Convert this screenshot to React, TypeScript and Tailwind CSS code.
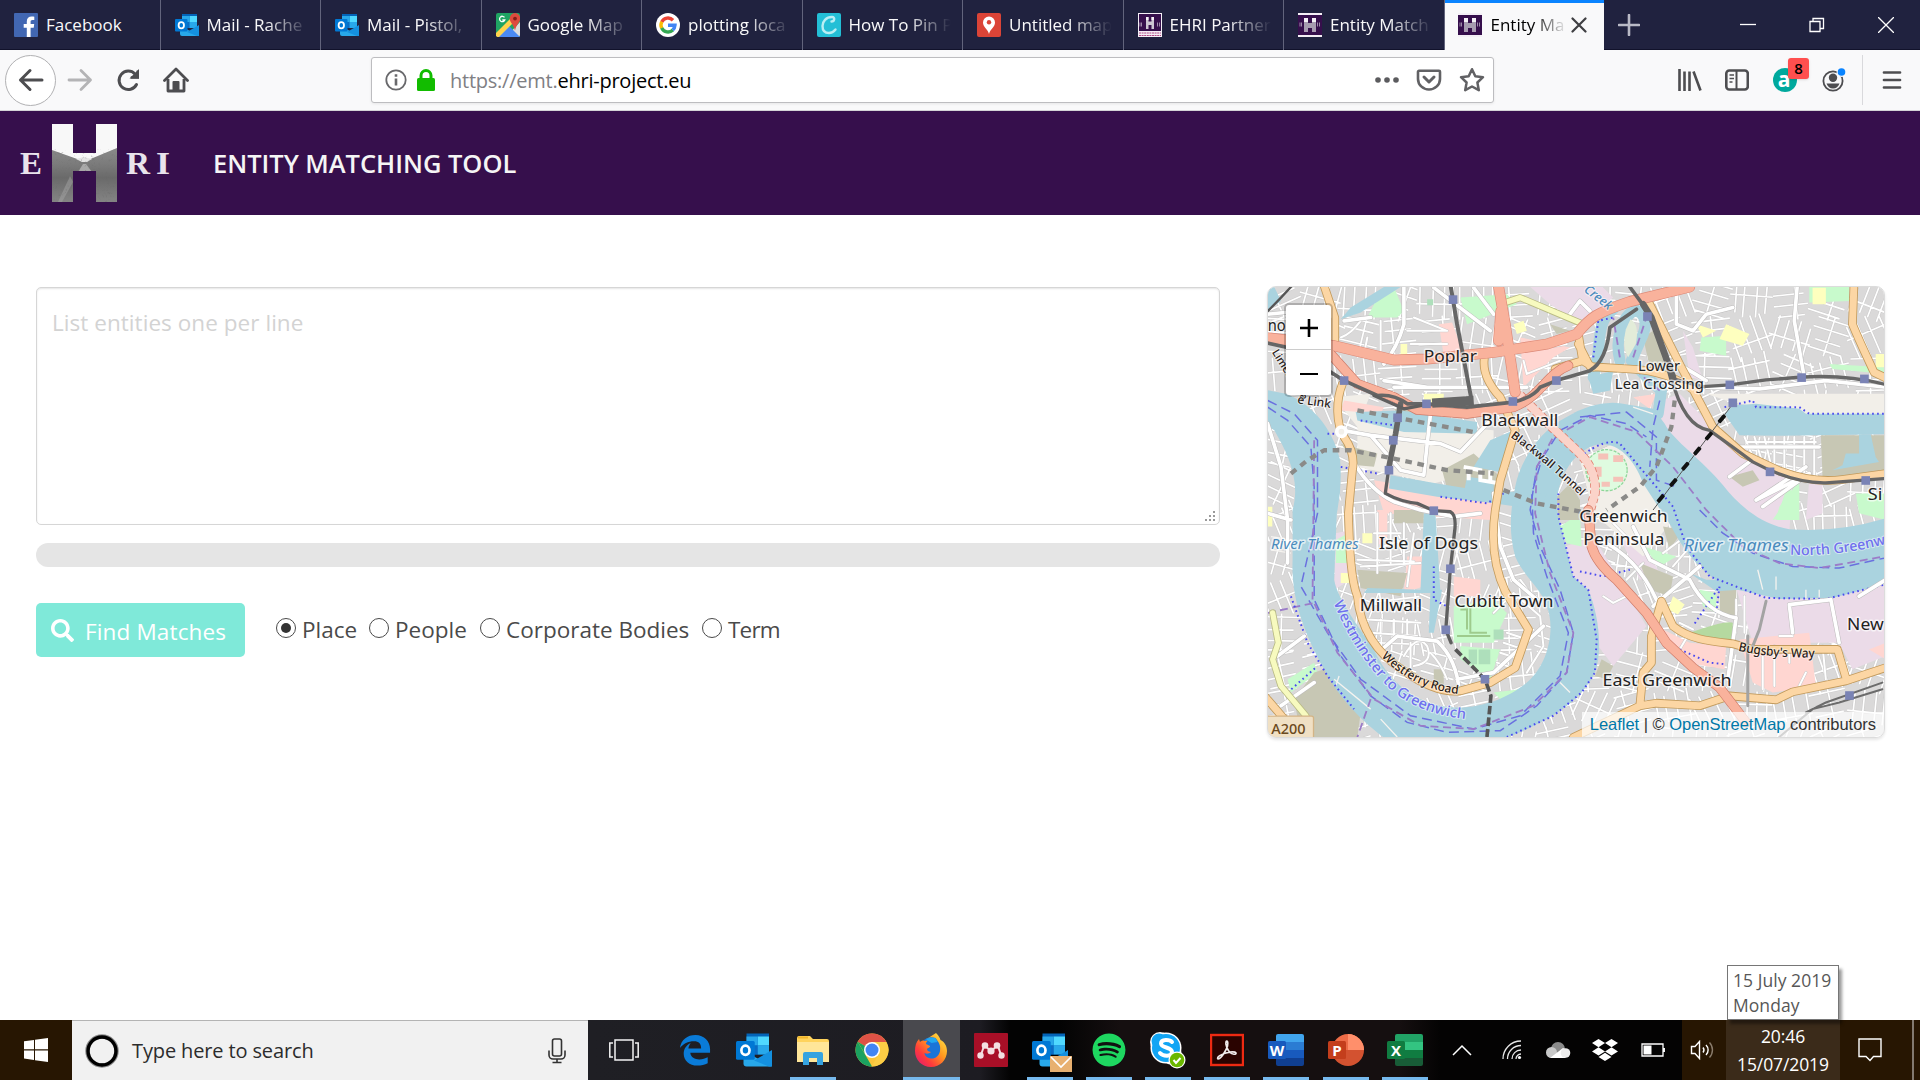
import React from "react";
import { FaSearch, FaDropbox, FaSpotify } from "react-icons/fa";

/* ---------- small drawings ---------- */

function Outlook({ className }: { className: string }) {
  return (
    <svg viewBox="0 0 24 24" className={className}>
      <rect x="7" y="1" width="15" height="14" fill="#0364b8" />
      <rect x="14.5" y="3" width="7.5" height="6" fill="#50d9ff" />
      <rect x="7" y="3" width="7.5" height="6" fill="#28a8ea" />
      <rect x="7" y="9" width="7.5" height="6" fill="#0a6bc4" />
      <rect x="14.5" y="9" width="7.5" height="6" fill="#28a8ea" />
      <path d="M5 12.5 L24 23 H7 a2 2 0 0 1-2-2z" fill="#28a8ea" />
      <path d="M24 12 L12 19 L22 23 H24z" fill="#1490df" />
      <rect x="0" y="6" width="12.5" height="12.5" rx="1" fill="#0078d4" />
      <ellipse cx="6.3" cy="12.2" rx="2.7" ry="3.1" fill="none" stroke="#fff" strokeWidth="1.8" />
    </svg>
  );
}

function Facebook() {
  return (
    <svg viewBox="0 0 24 24" className="size-6">
      <rect width="24" height="24" rx="1" fill="#4267b2" />
      <path d="M16.6 24v-9.2h3.1l.5-3.7h-3.6V8.8c0-1 .4-1.8 1.9-1.8h1.8V3.800c-.5-.1-1.500-.2-2.700-.2-2.800 0-4.800 1.700-4.800 4.800v2.700H9.700v3.700h3.100V24z" fill="#fff" />
    </svg>
  );
}

function GMaps() {
  return (
    <svg viewBox="0 0 24 24" className="size-6">
      <rect width="24" height="24" rx="2" fill="#1fa463" />
      <path d="M24 9 L10 24 H22a2 2 0 0 0 2-2z" fill="#dcdcdc" />
      <path d="M1 24 L12 12 L24 24z" fill="#4a89f3" />
      <path d="M0 20 L14 6 L17 10 L3 24 H1.500 L0 23z" fill="#ffd34d" />
      <path d="M19 0a5.500 5.500 0 0 1 5.300 5.500c0 4-4 6-5.300 12-1.300-6-5.300-8-5.300-12A5.500 5.500 0 0 1 19 0z" fill="#dd4b3e" />
      <circle cx="19" cy="5.600" r="1.900" fill="#821f17" />
      <path d="M8.500 4.400A2.700 2.700 0 1 0 8.800 7H6.300" fill="none" stroke="#fff" strokeWidth="1.300" />
    </svg>
  );
}

function Google() {
  return (
    <svg viewBox="0 0 24 24" className="size-6">
      <circle cx="12" cy="12" r="12" fill="#fff" />
      <g fill="none" strokeWidth="3.400">
        <path d="M17 7.200A7 7 0 0 0 5.700 9" stroke="#ea4335" />
        <path d="M5.800 8.700a7 7 0 0 0 0 6.600" stroke="#fbbc05" />
        <path d="M5.700 15a7 7 0 0 0 11.200 2" stroke="#34a853" />
        <path d="M12 12.200h7A7 7 0 0 1 16.700 17" stroke="#4285f4" />
      </g>
    </svg>
  );
}

function CLogo() {
  return (
    <svg viewBox="0 0 24 24" className="size-6">
      <rect width="24" height="24" rx="2" fill="#23bfd6" />
      <path d="M14.500 8.500c3 0 4-4.500.5-4.500-6 0-9.500 4.500-9.500 9 0 4.500 2.500 7 6.500 7 3 0 5-1.500 6.500-3.500" fill="none" stroke="#b9eef3" strokeWidth="2.400" strokeLinecap="round" />
    </svg>
  );
}

function PinLogo() {
  return (
    <svg viewBox="0 0 24 24" className="size-6">
      <rect width="24" height="24" rx="2" fill="#db4437" />
      <path d="M12 3.500a6 6 0 0 1 6 6c0 4.500-4.500 6-6 11.500-1.500-5.500-6-7-6-11.500a6 6 0 0 1 6-6z" fill="#fff" />
      <circle cx="12" cy="9.300" r="2.200" fill="#db4437" />
    </svg>
  );
}

function EhriIcon({ kind }: { kind: "full" | "band" }) {
  const full = kind === "full";
  return (
    <svg viewBox="0 0 24 24" className="size-6">
      <rect width="24" height="24" fill="#f4eff6" />
      <rect x={full ? 1 : 0} y={full ? 1 : 2} width={full ? 22 : 24} height={full ? 17 : 20} fill="#360f4c" />
      <path d={full ? "M8 4h2.500v4.500h3V4H16v12h-2.500v-4h-3v4H8z" : "M6 5h4v5h4V5h4v14h-4v-4h-4v4H6z"} fill={full ? "#cdc6d2" : "#a79cb0"} />
      <path d={full ? "M8 4h2.500v3H8zM13.500 4H16v3h-2.500z" : "M6 5h4v4H6zM14 5h4v4h-4z"} fill="#f3f0f5" />
      <path d="M2 9.500v4M3.500 9.500v4M19.500 9.500v4M21.500 9.500v4" stroke="#9d8aa8" />
      {full && <path d="M1 20h22M1 22.500h22" stroke="#b14a86" strokeDasharray="2 .6" />}
    </svg>
  );
}

/* ---------- browser chrome ---------- */

const tabs: { label: string; icon: React.ReactNode }[] = [
  { label: "Facebook", icon: <Facebook /> },
  { label: "Mail - Rache", icon: <Outlook className="size-6" /> },
  { label: "Mail - Pistol,", icon: <Outlook className="size-6" /> },
  { label: "Google Map", icon: <GMaps /> },
  { label: "plotting loca", icon: <Google /> },
  { label: "How To Pin P", icon: <CLogo /> },
  { label: "Untitled map", icon: <PinLogo /> },
  { label: "EHRI Partner", icon: <EhriIcon kind="full" /> },
  { label: "Entity Match", icon: <EhriIcon kind="band" /> },
];

function TabBar() {
  return (
    <div className="flex h-[50px] bg-[#20223f] text-[17px] text-[#f9f9fa] shadow-[inset_0_-1px_0_#11122b]">
      {tabs.map((t, i) => (
        <div key={i} className="flex w-[160.500px] shrink-0 items-center border-r border-[#62647c] pr-[7px] pl-[14px]">
          <span className="size-6 shrink-0">{t.icon}</span>
          <span className={`ml-[8px] min-w-0 flex-1 overflow-hidden whitespace-nowrap ${i === 0 ? "" : "[mask-image:linear-gradient(to_right,#000_55%,transparent_96%)]"}`}>
            {t.label}
          </span>
        </div>
      ))}
      <div className="flex w-[159px] shrink-0 items-center border-t-[3px] border-[#0a84ff] bg-[#f9f9fa] pb-[3px] pl-[13px] text-black">
        <EhriIcon kind="band" />
        <span className="ml-[9px] w-[75px] overflow-hidden whitespace-nowrap [mask-image:linear-gradient(to_right,#000_55%,transparent_102%)]">
          Entity Ma
        </span>
        <svg viewBox="0 0 16 16" className="ml-[5px] size-4">
          <path d="M1.500 1.500 L14.500 14.500 M14.500 1.500 L1.500 14.500" stroke="#3f3f42" strokeWidth="2.200" strokeLinecap="round" />
        </svg>
      </div>
      <div className="flex flex-1 items-center justify-between pr-[26px] pl-[14px]">
        <svg viewBox="0 0 22 22" className="size-[22px]">
          <path d="M11 1v20M1 11h20" stroke="#b9bac6" strokeWidth="2.600" strokeLinecap="round" />
        </svg>
        <div className="flex items-center gap-[53px]">
          <svg viewBox="0 0 16 16" className="size-4"><path d="M0 7.500h16" stroke="#fff" strokeWidth="1.300" /></svg>
          <svg viewBox="0 0 16 16" className="size-4" fill="none" stroke="#fff" strokeWidth="1.300"><path d="M1 4.500h10v10H1zM4 4.500V1.500h10.500v10H11" /></svg>
          <svg viewBox="0 0 16 16" className="size-4"><path d="M0 0L16 16M16 0L0 16" stroke="#fff" strokeWidth="1.300" /></svg>
        </div>
      </div>
    </div>
  );
}

function NavBar() {
  return (
    <div className="flex h-[61px] items-center border-b border-[#d3d3d6] bg-[#f9f9fa]">
      <div className="ml-[5px] flex size-[51px] shrink-0 items-center justify-center rounded-full border border-[#b1b1b3] bg-white">
        <svg viewBox="0 0 26 24" className="h-6 w-[26px]" fill="none" stroke="#4d4d50" strokeWidth="3" strokeLinecap="round" strokeLinejoin="round">
          <path d="M24 12H2.500M12 2.500L2.500 12L12 21.500" />
        </svg>
      </div>
      <svg viewBox="0 0 26 24" className="ml-[11px] h-6 w-[26px] shrink-0" fill="none" stroke="#b4b4b6" strokeWidth="2.800" strokeLinecap="round" strokeLinejoin="round">
        <path d="M2 12H23.500M14 2.500L23.500 12L14 21.500" />
      </svg>
      <svg viewBox="0 0 24 24" className="ml-[23px] size-6 shrink-0" fill="none" stroke="#4d4d50" strokeWidth="3">
        <path d="M20.500 16.500A9.200 9.200 0 1 1 19 6" strokeLinecap="round" />
        <path d="M23 1v9.500h-9.500z" fill="#4d4d50" stroke="none" />
        <path d="M21.800 2.500v7h-7" strokeWidth="2.400" />
      </svg>
      <svg viewBox="0 0 26 26" className="ml-[23px] size-[26px] shrink-0" fill="none" stroke="#4d4d50" strokeWidth="2.800" strokeLinejoin="round">
        <path d="M1.500 13.500L13 2L24.500 13.500" strokeLinecap="round" />
        <path d="M5 12v12h16V12" />
        <path d="M10.500 24v-9h5v9z" strokeWidth="2" fill="#4d4d50" />
      </svg>
      <div className="ml-[182px] flex h-[46px] w-[1123px] shrink-0 items-center rounded-[3px] border border-[#bdbdc0] bg-white pl-[13px] shadow-[0_1px_3px_rgba(0,0,0,0.08)]">
        <svg viewBox="0 0 22 22" className="size-[22px]" fill="none" stroke="#68686b" strokeWidth="1.800">
          <circle cx="11" cy="11" r="9.700" />
          <path d="M11 9.500V16.500M11 5.300V7.700" strokeWidth="2.600" />
        </svg>
        <svg viewBox="0 0 20 22" className="ml-[9px] h-[22px] w-5">
          <path d="M5 10V6.500a5 5 0 0 1 10 0V10" fill="none" stroke="#12bc00" strokeWidth="3" />
          <rect x="1" y="9" width="18" height="13" rx="1.500" fill="#12bc00" />
        </svg>
        <span className="ml-[14px] pt-[1px] text-[20px] tracking-[-0.240px] text-[#808084]">
          https://emt.<span className="text-black">ehri-project.eu</span>
        </span>
        <div className="mr-[8px] ml-auto flex items-center gap-[17px]">
          <svg viewBox="0 0 24 6" className="h-[6px] w-6" fill="#5b5b5e"><circle cx="3" cy="3" r="2.800" /><circle cx="12" cy="3" r="2.800" /><circle cx="21" cy="3" r="2.800" /></svg>
          <svg viewBox="0 0 26 22" className="h-[22px] w-[26px]" fill="none" stroke="#616164" strokeWidth="2.600" strokeLinecap="round" strokeLinejoin="round">
            <path d="M3 1.800h20a1 1 0 0 1 1 1V10a11 10.500 0 0 1-22 0V2.800a1 1 0 0 1 1-1z" />
            <path d="M8 8l5 5 5-5" strokeWidth="3" />
          </svg>
          <svg viewBox="0 0 26 26" className="size-[26px]" fill="none" stroke="#616164" strokeWidth="2.500" strokeLinejoin="round">
            <path d="M13 2.200l3.300 7 7.700 1-5.600 5.300 1.400 7.700L13 19.500l-6.800 3.700 1.400-7.700L2 10.200l7.700-1z" />
          </svg>
        </div>
      </div>
      <svg viewBox="0 0 24 22" className="ml-[184px] h-[22px] w-6 shrink-0" stroke="#4d4d50" strokeWidth="2.600">
        <path d="M1.500 0V22M6.500 2.500V22M11.500 2.500V22M15.500 2.500L22.500 21.500" />
      </svg>
      <svg viewBox="0 0 24 22" className="ml-[23px] h-[22px] w-6 shrink-0" fill="none" stroke="#4d4d50" strokeWidth="2.600">
        <rect x="1.300" y="1.500" width="21.500" height="19" rx="3" />
        <path d="M11.500 2v18" strokeWidth="2" /><path d="M4.500 6h4.500M4.500 9.500h4.500M4.500 13h3" strokeWidth="1.500" />
      </svg>
      <div className="relative ml-[24px] size-6 shrink-0">
        <svg viewBox="0 0 24 24" className="size-6">
          <circle cx="12" cy="12" r="12" fill="#00a99d" />
          <text x="11" y="18.500" textAnchor="middle" fontSize="21" fontWeight="700" fill="#fff" fontFamily="Open Sans">a</text>
        </svg>
        <div className="absolute -top-[10px] left-[15px] flex h-[21px] w-[21px] items-center justify-center rounded-[3px] bg-[#ff4f4f] text-[15px] font-semibold text-black shadow">8</div>
      </div>
      <svg viewBox="0 0 24 24" className="ml-[25px] size-6 shrink-0">
        <circle cx="11" cy="13" r="9.600" fill="none" stroke="#4d4d50" strokeWidth="1.800" />
        <circle cx="11" cy="9.800" r="4.200" fill="#4d4d50" />
        <path d="M4.500 15.500h13c-1 3-3.500 5-6.500 5s-5.500-2-6.500-5z" fill="#4d4d50" />
        <circle cx="19.500" cy="4" r="5" fill="#f9f9fa" /><circle cx="19.500" cy="4" r="3.800" fill="#0a84ff" />
      </svg>
      <div className="ml-[16px] h-[50px] w-px shrink-0 bg-[#d9d9dc]" />
      <svg viewBox="0 0 20 20" className="ml-[19px] h-5 w-5 shrink-0" stroke="#4d4d50" strokeWidth="2.700" strokeLinecap="round">
        <path d="M2 2.500H18M2 10H18M2 17.500H18" />
      </svg>
    </div>
  );
}

/* ---------- page header ---------- */

function Logo() {
  return (
    <svg viewBox="0 0 154 82" className="h-[82px] w-[154px]">
      <defs>
        <linearGradient id="ground" x1="0" y1="0" x2="0" y2="1">
          <stop offset="0" stopColor="#8a8a8a" /><stop offset=".3" stopColor="#7b7b7b" /><stop offset=".55" stopColor="#6a6a6a" /><stop offset="1" stopColor="#848484" />
        </linearGradient>
        <clipPath id="h"><path d="M34 2h21v29h23V2h21v78H78V49H55v31H34z" /></clipPath>
        <filter id="grain"><feTurbulence baseFrequency=".3" numOctaves="2" /><feColorMatrix values="0 0 0 0 .15 0 0 0 0 .15 0 0 0 0 .15 2.200 0 0 0 -.8" /></filter>
      </defs>
      <g clipPath="url(#h)">
        <rect x="34" y="2" width="65" height="78" fill="#f8f8f8" />
        <path d="M34 28L62 38H70L99 26V80H34z" fill="url(#ground)" />
        <path d="M58 37L66 35L74 37L69 40H64z" fill="#e4e4e4" />
        <path d="M65 42H68L74 50H60z" fill="#a9a9a9" />
        <path d="M52 54L40 80H44L55 60z" fill="#a8a8a8" opacity=".45" />
        <rect x="34" y="32" width="65" height="48" filter="url(#grain)" opacity=".5" />
      </g>
      <g fill="#e9e4ec" fontFamily="Liberation Serif" fontWeight="700" fontSize="32">
        <text x="2" y="51.500" textLength="22" lengthAdjust="spacingAndGlyphs">E</text>
        <text x="108" y="51.500" textLength="24" lengthAdjust="spacingAndGlyphs">R</text>
        <text x="138" y="51.500" textLength="14" lengthAdjust="spacingAndGlyphs">I</text>
      </g>
    </svg>
  );
}

/* ---------- map ---------- */

function seeded(seed: number) {
  let s = seed;
  return () => {
    s = (s * 16807) % 2147483647;
    return s / 2147483647;
  };
}

/* Minor streets: a jittered lattice with a local rotation per district. */
function minorStreets() {
  const r = seeded(4177);
  const out: string[] = [];
  for (let cx = 0; cx < 1900; cx += 118) {
    for (let cy = 0; cy < 1400; cy += 112) {
      const a = (r() - 0.5) * 0.9;
      const c = Math.cos(a), s = Math.sin(a);
      const line = (x1: number, y1: number, x2: number, y2: number) =>
        out.push(`M${(cx + 59 + x1 * c - y1 * s).toFixed(0)} ${(cy + 56 + x1 * s + y1 * c).toFixed(0)}L${(cx + 59 + x2 * c - y2 * s).toFixed(0)} ${(cy + 56 + x2 * s + y2 * c).toFixed(0)}`);
      const vert = r() > 0.5;
      for (let k = -1.5; k <= 1.5; k++) {
        const o = k * 33 + (r() - 0.5) * 10;
        const b = 38 + r() * 24, e = 38 + r() * 24;
        if (vert) line(o, -b, o, e); else line(-b, o, e, o);
      }
      const q = (r() - 0.5) * 60;
      if (vert) line(-64, q, 64, q); else line(q, -62, q, 62);
    }
  }
  return out.join("");
}
const streets = minorStreets();

const trunk = [
  "M10 170L220 195L400 238L500 235L700 215L860 190L950 160C990 110 1010 95 1110 62L1290 18",
  "M712 0L735 130L765 335",
  "M722 90L715 180M860 190",
];
const trunkSouth = [
  "M205 215L290 310L400 350L470 388L620 400L760 380C840 350 860 280 925 255",
  "M985 690L995 800Q1010 850 1070 900L1160 1000L1220 1090L1300 1165L1380 1225L1460 1330",
];
const primary = [
  "M185 0L222 110L222 190", "M245 310C225 360 225 430 250 470Q285 520 275 570L263 700C266 800 270 900 290 950C300 1060 360 1130 430 1175C500 1225 560 1240 600 1235L690 1210L765 1165L805 1050L735 935C695 850 695 760 705 690L720 600L765 450L720 350Q665 290 672 235",
  "M1165 60L1265 260L1360 440L1450 520L1560 572Q1660 610 1750 598L1880 580",
  "M955 190L990 258L1110 265Q1230 270 1310 335", "M955 160L968 240L1000 260M885 265L968 240",
  "M1785 0L1780 130C1800 180 1820 220 1845 275L1880 292",
  "M1205 965L1240 1040C1290 1080 1350 1085 1420 1093L1480 1110H1735L1760 1195", "M940 1375L1140 1280L1190 1272L1320 1280L1410 1250L1550 1262L1600 1238L1760 1205L1880 1165",
  "M1140 1280L1150 1180L1175 1150V1070L1205 965",
  "M10 1250L70 1320",
];
const white = [
  "M400 320H800M370 300L500 320M430 18V130Q410 200 370 250M330 110L250 120", "M245 450L330 465L540 490L600 515L690 420M330 465L420 570L490 585L510 400M520 20L690 150",
  "M285 555Q330 630 400 665L480 690L580 710L660 700", "M370 1105L410 1070L530 1085Q590 1140 597 1240M590 1200L700 1180L850 1040",
  "M1250 0L1250 130L1300 150L1340 100L1420 80M1615 0L1605 120L1635 290M1340 300L1240 240", "M1340 320L1500 325L1700 300L1880 320",
  "M1020 780Q1130 830 1190 960M1120 740L1170 840L1290 900Q1340 1000 1430 1015L1405 1200", "M1180 980L1320 860M1590 975L1600 1060M1590 975L1715 960L1740 1090M1800 950L1880 900",
  "M1440 500H1680", "M1410 590L1470 545M1490 660L1640 560M1510 680L1650 580L1490 660M20 100L120 90", "M640 20L700 100M930 100L960 60L990 90",
  "M20 430L60 560L80 720L80 850M20 700L90 720", "M60 1280L160 1210M50 1130L130 1070", "M700 640L720 800L760 900L830 960",
];
const lanes = [
  "M1455 470L1480 530M1485 470L1510 550M1515 470L1535 555M1545 470V570M1575 470V575M1605 470V580M1635 470V585M1665 470V585M1460 485H1670",
  "M1430 960V1060M1455 950V1060M1510 1130V1230M1545 1100V1220M1590 1110V1150M1690 1100L1700 1200M1640 1180L1620 1220M1560 1070H1600",
  "M1030 950L1060 970L1120 940M1100 900L1150 850M1060 730L1120 790M1210 820L1290 760M1240 860L1300 790M1260 1030L1300 1050M1260 1110L1290 1060",
  "M700 1000L760 940L840 1010L850 1100L800 1180M740 1060L800 1080M730 1090L790 1110M720 1120L780 1140M710 1150L770 1170M780 900L840 980",
  "M320 1020L480 1030M330 1060L470 1070M360 1020V1070M400 1020V1070M440 1020V1070M430 1130Q470 1060 500 1100Q520 1150 460 1160M450 1090V1200M510 1120Q540 1150 560 1200",
  "M290 840L460 845M300 860L480 850M350 700V880M390 700V850M430 730V850M460 760L440 920M340 760H420",
  "M790 240L800 280L900 240M800 210L920 190M300 120Q270 160 240 170M320 170L310 220M360 120V210M460 110L560 150M440 150H560M450 190H560",
];

const stations: [number, number][] = [
  [578, 56], [250, 300], [498, 370], [758, 363], [889, 300], [411, 412], [398, 480], [385, 570], [520, 692], [570, 867], [556, 1051], [674, 1200],
  [1163, 107], [1411, 313], [1627, 291], [1816, 295], [1532, 575], [1820, 601], [1771, 1249], [1420, 367],
];

function Label({ x, y, w, size = 51, children, fill = "#222", italic = false }: { x: number; y: number; w: number; size?: number; children: string; fill?: string; italic?: boolean }) {
  return (
    <text x={x} y={y} fontSize={size} fill={fill} fontStyle={italic ? "italic" : "normal"} textLength={w} lengthAdjust="spacingAndGlyphs" stroke="#fff" strokeOpacity=".65" strokeWidth="9" strokeLinejoin="round" paintOrder="stroke">
      {children}
    </text>
  );
}

function Lines({ d, color, width, dash, cap = "round" }: { d: string[]; color: string; width: number; dash?: string; cap?: "round" | "butt" }) {
  return <path d={d.join("")} fill="none" stroke={color} strokeWidth={width} strokeDasharray={dash} strokeLinecap={cap} strokeLinejoin="round" />;
}

function MapDrawing() {
  return (
    <svg viewBox="21 18 1854 1356" preserveAspectRatio="none" className="block h-full w-full" fontFamily="Noto Sans">
      <rect x="0" y="0" width="1900" height="1400" fill="#dad9d9" />
      <path d={streets} fill="none" stroke="#cbcaca" strokeWidth="8" />
      <path d={streets} fill="none" stroke="#fff" strokeWidth="5" />
      {/* land use */}
      <g fill="#ebdbe8">
        <path d="M790 0H1010L1060 50L960 130L870 70z" />
        <path d="M1180 370L1260 340L1370 450L1600 600L1590 760L1490 720L1400 640L1240 480z" />
        <path d="M915 800L1000 770L1080 900L1160 1040L1060 1160L1000 1080L985 940L940 890z" />
        <path d="M1060 730L1100 700L1200 880L1140 900zM1430 925L1880 915V1130L1780 1170L1740 1090H1480z" />
        <path d="M225 760L270 750V900L220 930zM1650 600L1690 590V700L1640 720zM1270 150L1300 200L1330 300L1290 290z" />
      </g>
      <g fill="#f2efe9">
        <path d="M290 420L700 450L700 560L520 610L290 560zM1340 340H1880V410H1620L1400 360zM960 540L1060 490L1140 540L1240 720L1150 830L1000 700zM220 350L330 340L290 440z" />
      </g>
      <g fill="#ffd6d1">
        <path d="M535 130L575 125L610 220L550 225zM780 170L930 200L880 230L790 320zM340 600L700 660L690 720L370 700zM440 830H490V920L430 940zM580 890L660 900V950H580z" />
        <path d="M1210 1050L1290 1090L1400 1100L1395 1170L1280 1150zM1440 1080L1650 1060L1670 1220L1540 1240L1480 1210zM1120 350L1190 340L1170 385zM1830 1110L1880 1090V1140z" />
        <path d="M350 690H380V770L350 800zM250 360L370 380L360 400L240 390z" />
      </g>
      <g fill="#c8facc">
        <path d="M350 50L390 18H400L430 90L410 110H320zM600 50L740 40L770 70L620 130zM1650 0H1770L1770 60L1650 65zM1325 170L1400 165L1400 225L1320 210z" />
        <path d="M580 980L700 960L740 1000L700 1090H580zM600 1100L720 1110L690 1200L600 1140zM700 1240L780 1230L740 1280zM225 780L262 760V850H225zM1590 600L1610 700L1540 720L1560 690z" />
        <path d="M900 740L960 700L965 800L920 790zM1790 640H1880V720L1800 700zM1710 250L1880 260V280L1720 265zM80 1200L160 1150L170 1180L90 1240zM1150 800L1250 830L1200 860zM1320 930L1370 940V1000L1330 980zM1560 680L1620 600V720H1550z" />
      </g>
      <path d="M1290 1060Q1400 1020 1420 1030V1090L1290 1080z" fill="#b5d9a0" />
      <g fill="#aedfbb"><path d="M625 1110H650V1155H625zM655 1110H690V1155H655zM700 1050h30v30h-30zM500 55h18v18h-18z" /></g>
      <path d="M600 990H620V1050M630 985V1060H680M590 1070H690" fill="none" stroke="#9ecb8d" strokeWidth="6" />
      <g fill="#c7c7b4">
        <path d="M290 870L440 880L420 950L300 925zM160 1180L190 1170L300 1300L290 1374H120L100 1260zM545 570L640 520L720 590L700 640L560 625zM400 385L510 395V420H420zM1685 465H1875V585L1690 590z" />
        <path d="M1150 170L1180 150L1230 280L1170 260zM890 650L930 610L960 660V720H895zM1140 850L1240 890L1230 950L1170 930zM1380 930H1430V1010L1380 1000zM1410 590L1480 570L1500 600L1450 620zM520 1170H550V1220H520zM240 490L350 520L340 560L290 555zM870 130L930 150L890 160zM400 690H490V730H400zM1210 740L1270 750L1230 810zM1025 1140L1060 1160L1040 1200L1005 1190z" />
      </g>
      <g fill="#feffbf">
        <path d="M420 190h20v35h-20zM490 340h60v40h-60zM760 130l30-10 10 30-30 10zM1310 130l60 20-40 20zM1400 130L1470 160L1450 195L1380 175zM1660 20h40v50h-40zM1850 220h30v40h-30zM240 880h25v30h-25zM305 760h30v30h-30zM1240 950l35 25-20 30-30-15zM20 680h14v60h-14z" />
      </g>
      <Lines d={lanes} color="#cbcaca" width={9} />
      <Lines d={lanes} color="#fff" width={6} />

      {/* river */}
      <path
        d="M0 325L75 340C150 370 215 440 238 540Q245 620 228 700L220 900C230 960 300 1050 340 1110C380 1200 450 1260 540 1280C640 1300 740 1260 800 1210C870 1150 885 1040 860 980C840 920 790 890 765 830C745 760 750 690 765 620C780 540 840 450 920 410Q1000 360 1080 368L1180 385L1215 430C1240 480 1330 540 1390 615C1440 680 1510 735 1590 748Q1740 760 1890 712V910L1720 955L1560 958L1410 925C1340 890 1280 830 1235 740L1150 610C1110 500 1030 460 960 520C910 560 880 640 895 710L915 790L940 890L985 930C1015 1000 1030 1110 1005 1180C970 1250 900 1320 700 1390H390C330 1350 240 1270 190 1170C130 1060 90 960 95 840V690C120 600 80 520 40 450L0 420z"
        fill="#aad3df"
      />
      <g fill="#aad3df">
        <path d="M285 395L420 390L650 425V460L430 455L290 420z" />
        <path d="M390 585L530 610L650 630L860 640L840 690L700 670L530 650L385 625z" />
        <path d="M690 480L760 450L740 580L640 560zM620 590L700 600V640H610z" />
        <path d="M490 700H525L540 940H310L320 925L480 930zM510 930H545L520 1060H505z" />
        <path d="M1395 400L1420 375L1490 370L1620 385L1640 400H1880V462L1560 466L1440 465z" />
        <path d="M1800 462H1835L1850 530L1860 545L1720 570L1750 555L1760 520H1800zM1290 880L1340 900H1440V930L1370 935z" />
        <path d="M985 290L1060 270L1050 330L1000 340z" />
        <path d="M20 20L40 18L60 60L20 90zM270 80L370 18H420L300 95L240 115z" />
      </g>
      <Lines d={["M1000 290C1030 200 1000 130 1060 85", "M1080 240C1065 180 1085 100 1130 88Q1170 105 1150 160L1115 240Q1150 280 1205 330L1195 400"]} color="#aad3df" width={34} />
      <path d="M1112 115Q1140 130 1128 190L1105 230Q1085 200 1098 145z" fill="#e3ecd9" />
      <circle cx="1040" cy="570" r="62" fill="#dffbe0" stroke="#8fd79a" strokeWidth="4" strokeDasharray="9 4" />
      <g fill="#f5c2b8"><path d="M1015 520h30v18h-30zM1060 525h30v20h-30zM1005 560h20v30h-20zM1060 590h30v15h-30zM1025 605h25v15h-25z" /></g>
      {/* marina blocks and jetties */}
      <g fill="none" stroke="#fff" strokeWidth="12"><path d="M610 560L660 570V600L720 610M625 560V600M690 570V600" /></g>
      <g fill="none" stroke="#f5f3ef" strokeWidth="4">
        <path d="M220 1200L330 1290M235 1190L225 1220M1495 870L1510 930M1550 890V930M1640 930V955M1680 930V955M1120 380L1180 400M900 1210L930 1240M360 1320L410 1374M30 770L95 780M30 810L90 820M1000 760V800" />
      </g>

      {/* ferry routes and park paths */}
      <g fill="none" stroke="#6a70df" strokeWidth="4.500" strokeDasharray="30 16">
        <path d="M20 380L80 420L150 500L160 620V960L240 1130L330 1250L440 1330L560 1360L720 1355L830 1280L920 1180L940 1060L900 930L840 800L810 690L830 560L900 450L990 405L1100 430L1160 470" />
        <path d="M20 360L100 400L170 480V700L120 920L200 1060L300 1200L450 1310L640 1350L780 1310L900 1190L925 1060L860 890L820 760L815 640L850 520" />
        <path d="M960 410L1100 395L1190 470L1190 600L1250 620M1320 690L1390 760L1480 820L1600 860L1740 865L1875 835" />
        <path d="M1200 360L1180 440L1170 560" />
      </g>
      <g fill="none" stroke="#9b7cc8" strokeWidth="5.500" strokeDasharray="24 14">
        <path d="M160 480L155 960L230 1120L340 1260L480 1340L640 1350L820 1280L920 1180L940 1060L870 880L825 700L830 560L880 470L990 410L1130 455L1240 560L1340 690L1450 800L1560 850L1680 865L1875 830" />
        <path d="M20 1000L160 970M330 1260L290 1374M1200 330L1140 280M1080 230L1060 110M1120 230L1160 110" />
      </g>
      <g fill="none" stroke="#4a4af0" strokeWidth="6" strokeDasharray="5 10">
        <path d="M960 530Q1040 470 1080 490L1240 680L1280 800L1350 890L1520 955L1700 958L1875 915" />
        <path d="M895 640V710L915 790L940 890L985 930L1010 1080L1005 1180L965 1240L880 1310L740 1374" />
        <path d="M90 950L140 1090L200 1190L280 1290M540 650L680 670L730 640M240 560L350 580M300 420L400 435M520 860V960L560 980" />
        <path d="M1395 380L1480 360L1490 380H1620L1650 400H1875M1000 230L1015 120L1060 110" />
        <path d="M960 875L1030 890L1110 870M1370 1000L1380 920L1300 1040M80 1240L170 1160M200 460H250M1260 1110L1350 1150L1400 1155" />
      </g>

      {/* streets */}
      <Lines d={white} color="#bcbbbb" width={14} />
      <Lines d={white} color="#fff" width={11} />
      <Lines d={["M35 1000L52 1090L35 1140L60 1220L135 1310", "M735 65L780 50L970 130"]} color="#b9bb84" width={21} />
      <Lines d={["M35 1000L52 1090L35 1140L60 1220L135 1310", "M735 65L780 50L970 130"]} color="#f7fabf" width={16} />
      {/* tunnel */}
      <Lines d={["M780 345L870 435L960 520Q1010 570 1005 640L985 710"]} color="#e08070" width={29} dash="14 8" cap="butt" />
      <Lines d={["M780 345L870 435L960 520Q1010 570 1005 640L985 710"]} color="#fbd3c9" width={24} />
      <Lines d={primary} color="#c29a5c" width={26} />
      <Lines d={primary} color="#fcd6a4" width={21} />
      <circle cx="242" cy="454" r="14" fill="#f2efe9" stroke="#fff" strokeWidth="11" />
      <Lines d={trunk} color="#dd8a78" width={33} />
      <Lines d={trunkSouth} color="#cf7b69" width={30} />
      <Lines d={trunk} color="#f9b29c" width={29} />
      <Lines d={trunkSouth} color="#f9b29c" width={26} />

      {/* railways */}
      <Lines d={["M10 185L100 205L250 300L350 345Q400 340 440 370L500 370L620 380L760 365Q820 350 840 320L889 300L990 270Q1040 240 1050 140L1130 85", "M1110 18L1163 90L1205 190L1235 300"]} color="#666" width={11} />
      <Lines d={["M1150 70L1175 110L1215 220L1240 290"]} color="#666" width={20} />
      <Lines d={["M1235 290C1250 350 1280 440 1350 450Q1420 500 1480 545Q1600 610 1700 608L1880 595", "M1240 295L1330 318L1411 313L1520 298L1620 290Q1760 280 1880 312"]} color="#666" width={10} />
      <Lines d={["M570 10L590 130L632 350"]} color="#666" width={12} />
      <Lines d={["M515 368L640 360"]} color="#666" width={28} cap="butt" />
      <Lines d={["M420 370L405 460L385 560"]} color="#666" width={17} />
      <Lines d={["M385 560L374 640Q420 665 470 670L520 692L570 695Q590 705 582 760L570 867L556 1051L572 1090", "M340 345L430 385L500 372"]} color="#5f5f5f" width={10} />
      <Lines d={["M585 1110L674 1200L692 1250L680 1374"]} color="#555" width={11} dash="26 9" cap="butt" />
      <Lines d={["M290 390L640 455", "M90 580L140 540L190 510L270 510L400 535L560 570L700 580M730 630L830 670L990 700", "M1245 360L1235 440L1190 560L1140 620L1040 690"]} color="#8a8a88" width={13} dash="20 17" cap="butt" />
      <Lines d={["M1520 965L1500 1050L1480 1100", "M1465 1070V1280"]} color="#a3a3a3" width={9} />
      <Lines d={["M1640 1300L1700 1270L1870 1210", "M1560 1374L1660 1290L1740 1270L1870 1230"]} color="#6c6c6c" width={6} />
      <Lines d={["M21 90L60 50L90 18"]} color="#555" width={7} />
      <path d="M1420 370L1180 690" stroke="#555" strokeWidth="3" />
      <g fill="#111">
        {[[1387, 415], [1348, 467], [1313, 512], [1277, 558], [1241, 607], [1203, 655]].map(([x, y]) => (
          <rect key={x} x={x - 14} y={y - 6} width="28" height="12" rx="3" transform={`rotate(-50 ${x} ${y})`} />
        ))}
      </g>
      <g fill="#7a83b5">
        {stations.map(([x, y]) => <rect key={`${x}-${y}`} x={x - 13} y={y - 13} width="26" height="26" />)}
      </g>

      {/* labels */}
      <Label x={490} y={243} w={160}>Poplar</Label>
      <Label x={663} y={438} w={232}>Blackwall</Label>
      <Label x={1135} y={270} w={126} size={41}>Lower</Label>
      <Label x={1065} y={325} w={268} size={41}>Lea Crossing</Label>
      <Label x={355} y={807} w={298}>Isle of Dogs</Label>
      <Label x={297} y={994} w={188}>Millwall</Label>
      <Label x={582} y={983} w={298}>Cubitt Town</Label>
      <Label x={958} y={727} w={266}>Greenwich</Label>
      <Label x={970} y={795} w={244}>Peninsula</Label>
      <Label x={1028} y={1221} w={388}>East Greenwich</Label>
      <Label x={1764} y={1053} w={110}>New</Label>
      <Label x={1826} y={660} w={44}>Si</Label>
      <Label x={20} y={151} w={54} size={48}>no</Label>
      <Label x={30} y={807} w={264} size={42} fill="#4a8bbd" italic>River Thames</Label>
      <Label x={1272} y={815} w={316} size={48} fill="#4a8bbd" italic>River Thames</Label>
      <defs>
        <path id="p1" d="M218 970Q290 1140 400 1240Q490 1310 640 1322" />
        <path id="p2" d="M362 1132Q460 1234 610 1246" />
        <path id="p3" d="M750 470Q850 540 975 660" />
        <path id="p4" d="M1436 1114Q1540 1138 1690 1134" />
        <path id="p5" d="M1592 825Q1740 832 1900 787" />
      </defs>
      <g stroke="#fff" strokeOpacity=".5" strokeWidth="6" paintOrder="stroke" strokeLinejoin="round" fontWeight="500">
        <g fill="#6f70ee">
          <text fontSize="43"><textPath href="#p1" textLength="560" lengthAdjust="spacingAndGlyphs">Westminster to Greenwich</textPath></text>
          <text fontSize="43"><textPath href="#p5">North Greenw</textPath></text>
        </g>
        <g fill="#2a2018">
          <text fontSize="36"><textPath href="#p2" textLength="262" lengthAdjust="spacingAndGlyphs">Westferry Road</textPath></text>
          <text fontSize="34"><textPath href="#p3" textLength="278" lengthAdjust="spacingAndGlyphs">Blackwall Tunnel</textPath></text>
          <text fontSize="38"><textPath href="#p4" textLength="232" lengthAdjust="spacingAndGlyphs">Bugsby's Way</textPath></text>
        </g>
        <text x="32" y="215" fontSize="33" fill="#2a2018" transform="rotate(58 32 215)">Limehouse</text>
        <text x="108" y="368" fontSize="36" fill="#2a2018" transform="rotate(8 108 368)">e Link</text>
        <text x="970" y="30" fontSize="38" fill="#4a8bbd" fontStyle="italic" transform="rotate(38 970 30)">Creek</text>
      </g>
      <rect x="15" y="1311" width="143" height="70" rx="6" fill="#f0e0c4" stroke="#d3b486" strokeWidth="4" />
      <text x="31" y="1365" fontSize="42" fontWeight="500" fill="#6b4a20" textLength="103" lengthAdjust="spacingAndGlyphs">A200</text>
    </svg>
  );
}

function MapPanel() {
  return (
    <div className="relative h-[452px] w-[618px] overflow-hidden rounded-[9px] border border-[#dcdcdc] shadow-[0_2px_3px_rgba(10,10,10,0.1)]">
      <MapDrawing />
      <div className="absolute top-[16px] left-[16px] flex w-[49px] flex-col overflow-hidden rounded-[5px] border-2 border-black/20 bg-white bg-clip-padding">
        <div className="flex h-[45px] items-center justify-center border-b border-[#ccc]">
          <svg viewBox="0 0 20 20" className="mt-[2px] size-5"><path d="M10 1v18M1 10h18" stroke="#000" strokeWidth="2.600" /></svg>
        </div>
        <div className="flex h-[45px] items-center justify-center">
          <svg viewBox="0 0 20 20" className="mt-[2px] size-5"><path d="M1 10h18" stroke="#000" strokeWidth="2.200" /></svg>
        </div>
      </div>
      <div className="absolute right-0 bottom-0 flex h-[25px] items-center bg-white/70 pr-[8px] pl-[8px] font-['Liberation_Sans',sans-serif] text-[16.500px] tracking-[-0.020px] whitespace-pre text-[#333]">
        <span className="text-[#0078a8]">Leaflet</span> | © <span className="text-[#0078a8]">OpenStreetMap</span> contributors
      </div>
    </div>
  );
}

/* ---------- page body ---------- */

function Radio({ label, on = false, className }: { label: string; on?: boolean; className: string }) {
  return (
    <label className={`flex items-center ${className}`}>
      <span className="mb-[4px] flex size-5 shrink-0 items-center justify-center rounded-full border-[1.500px] border-[#4a4a4a] bg-white">
        {on && <span className="size-[10px] rounded-full bg-[#333]" />}
      </span>
      <span className="ml-[6px]">{label}</span>
    </label>
  );
}

function Content() {
  return (
    <main className="flex h-[805px] items-start pt-[71px] pl-[36px]">
      <section className="w-[1184px] pt-[1px]">
        <div className="flex h-[238px] items-start justify-between rounded-[5px] border border-[#d6d6d6] pt-[18px] pl-[15px] shadow-[inset_0_1px_2px_rgba(10,10,10,0.1)]">
          <span className="text-[22.500px] tracking-[0.050px] text-[#d3d3d3]">List entities one per line</span>
          <svg viewBox="0 0 12 12" className="mr-[3px] mb-[1px] size-3 self-end" fill="#9a9a9a">
            <path d="M9 0h2v2H9zM5 4h2v2H5zM9 4h2v2H9zM1 8h2v2H1zM5 8h2v2H5zM9 8h2v2H9z" />
          </svg>
        </div>
        <div className="mt-[18px] h-6 rounded-full bg-[#e5e5e5]" />
        <div className="mt-[36px] flex items-center text-[22.500px] text-[#4a4a4a]">
          <button className="flex h-[54px] w-[209px] items-center rounded-[5px] bg-[#7fe9d9] pl-[15px] text-white">
            <FaSearch className="size-[23px]" />
            <span className="ml-[11px] pt-[3px] tracking-[0.150px] whitespace-nowrap">Find Matches</span>
          </button>
          <Radio label="Place" on className="ml-[31px] w-[93px]" />
          <Radio label="People" className="w-[111px]" />
          <Radio label="Corporate Bodies" className="w-[222px] whitespace-nowrap" />
          <Radio label="Term" className="tracking-[-0.800px]" />
        </div>
      </section>
      <section className="ml-[47px]">
        <MapPanel />
      </section>
    </main>
  );
}

/* ---------- task bar ---------- */

function OfficeIcon({ letter, tile, bands, round = false }: { letter: string; tile: string; bands: [string, string, string, string]; round?: boolean }) {
  const id = `clip-${letter}`;
  return (
    <svg viewBox="0 0 36 36" className="size-9">
      <clipPath id={id}>{round ? <circle cx="20" cy="18" r="16" /> : <rect x="8" y="2" width="28" height="32" rx="2" />}</clipPath>
      <g clipPath={`url(#${id})`}>
        <rect x="0" y="0" width="36" height="10" fill={bands[0]} /><rect x="0" y="10" width="36" height="8" fill={bands[1]} />
        <rect x="0" y="18" width="36" height="8" fill={bands[2]} /><rect x="0" y="26" width="36" height="10" fill={bands[3]} />
        {round && <path d="M20 0H36V18H20z" fill="#ff8f6b" />}
      </g>
      <rect x="0" y="9" width="18" height="18" rx="1.500" fill={tile} />
      <text x="9" y="23.500" textAnchor="middle" fontFamily="Open Sans" fontWeight="700" fontSize="15" fill="#fff">{letter}</text>
    </svg>
  );
}

const apps: { icon: React.ReactNode; open?: boolean; active?: boolean }[] = [
  { icon: (
    <svg viewBox="0 0 34 34" className="size-8">
      <path d="M1 15C2 6 9 1 17.500 1C27 1 33 8 33 16v4H12c.5 5 5 7 9.500 7 3.500 0 6.500-1 9-2.300V31c-3 1.700-7 2.600-11 2.600C11 33.600 5 28.500 5 21c0-5.500 3-9.500 7.500-11.500C11 11.500 10.300 13.200 10 15.300h13.500c0-5-2.500-7.600-7.500-7.600C9.500 7.700 4.500 10.500 1 15z" fill="#0a7bd8" />
    </svg>) },
  { icon: <Outlook className="size-9" /> },
  { icon: (
    <svg viewBox="0 0 34 32" className="h-8 w-[34px]">
      <path d="M1 4a2 2 0 0 1 2-2h11l3 3h14a2 2 0 0 1 2 2v19H1z" fill="#ffd35c" /><path d="M1 8h32v20H1z" fill="#ffe699" />
      <path d="M2 3.500h10" stroke="#f0b429" strokeWidth="2" /><path d="M7 31V20a2 2 0 0 1 2-2h16a2 2 0 0 1 2 2v11h-6v-7h-8v7z" fill="#36a3e0" />
    </svg>), open: true },
  { icon: (
    <svg viewBox="0 0 34 34" className="size-[34px]">
      <circle cx="17" cy="17" r="16.500" fill="#fbc53a" />
      <path d="M17 17L2.700 8.800A16.500 16.500 0 0 1 31.300 8.800z" fill="#de5246" /><path d="M2.700 8.800L17 33.500A16.500 16.500 0 0 1 2.700 8.800z" fill="#1aa260" />
      <path d="M10 21L2.700 8.800L17 17zM16.500 33.500L24 21z" fill="#1aa260" /><path d="M17 9h14.400A16.500 16.500 0 0 1 16.500 33.500L24 21z" fill="#fccd45" />
      <circle cx="17" cy="17" r="8" fill="#fff" /><circle cx="17" cy="17" r="6.500" fill="#4285f4" />
    </svg>) },
  { icon: (
    <svg viewBox="0 0 34 34" className="size-[34px]">
      <defs><linearGradient id="fx" x1="1" y1="0" x2="0" y2="1"><stop offset="0" stopColor="#fff44f" /><stop offset=".4" stopColor="#ff9a1f" /><stop offset=".7" stopColor="#ff3b3b" /><stop offset="1" stopColor="#d9137f" /></linearGradient></defs>
      <path d="M22 0c3 3 4 5 4.500 7 4 2 6.500 6 6.500 11 0 9-7 16-16 16S1 27 1 18c0-5 1-9 4-12l1 3c1-1 3-2 5-2z" fill="url(#fx)" />
      <path d="M9 8A12 12 0 0 1 21.500 5c3 4 5.500 7 4.500 13-1 5-5 8-9 7.500-4-.5-6.500-3-6.500-5.500 2 1 4.500 1 6.500-1-3-.5-4-1.500-4-3 0-1 3-1 3-3l-4-2c0-1.500.8-2.500 2-3.500z" fill="#1b74d8" />
      <path d="M12 6a12 12 0 0 1 9.500-1l2 4-6 1-4-2.500z" fill="#21a8f0" />
    </svg>), open: true, active: true },
  { icon: (
    <svg viewBox="0 0 34 34" className="size-[34px]">
      <rect width="34" height="34" rx="1" fill="#a80f27" />
      <path d="M11 13l6 5 6-5M10 13L7 22M24 13l3 9" stroke="#f3dfe1" strokeWidth="2" fill="none" />
      <g fill="#f3dfe1"><circle cx="11" cy="12.500" r="3.300" /><circle cx="23" cy="12.500" r="3.300" /><circle cx="17" cy="18" r="3.600" /><circle cx="6.500" cy="22.500" r="3.200" /><circle cx="27.500" cy="22.500" r="3.200" /></g>
    </svg>) },
  { icon: (
    <div className="relative size-9">
      <Outlook className="size-9" />
      <svg viewBox="0 0 22 16" className="absolute -right-[4px] -bottom-[4px] h-4 w-[22px]"><rect width="22" height="16" fill="#e8b070" /><path d="M1 1L11 11L21 1" fill="none" stroke="#fff" strokeWidth="1.600" /></svg>
    </div>), open: true },
  { icon: <FaSpotify className="size-[34px] rounded-full bg-[#111] text-[#1ed760]" />, open: true },
  { icon: (
    <svg viewBox="0 0 38 38" className="size-[38px]">
      <circle cx="11" cy="11" r="10" fill="#fff" /><circle cx="23" cy="24" r="10" fill="#fff" /><circle cx="17" cy="17" r="15.500" fill="#fff" /><circle cx="17" cy="17" r="14" fill="#12a5f4" /><circle cx="10" cy="10" r="7.500" fill="#12a5f4" />
      <path d="M23 11c-2-2.500-11-3.500-11 1.500 0 5 11 3 11 8.500 0 5-9 4.500-12 1" fill="none" stroke="#fff" strokeWidth="4" strokeLinecap="round" />
      <circle cx="28" cy="29" r="8.500" fill="#fff" /><circle cx="28" cy="29" r="7.300" fill="#6bb700" /><path d="M24.500 29l2.500 3 4.500-5" fill="none" stroke="#fff" strokeWidth="2" />
    </svg>), open: true },
  { icon: (
    <svg viewBox="0 0 34 34" className="size-[34px]">
      <rect x="1" y="2" width="32" height="30" fill="#2a0300" stroke="#ee2a12" strokeWidth="2.400" />
      <path d="M8 26c-2-2 4-5 8-6s9-1.500 10 0c.5 2-4 1.500-6-.500S15 12 16 9c1-2 2.500 0 1.500 4S11 26 8 26z" fill="none" stroke="#f2ecec" strokeWidth="1.700" />
    </svg>), open: true },
  { icon: <OfficeIcon letter="W" tile="#185abd" bands={["#41a5ee", "#2b7cd3", "#185abd", "#103f91"]} />, open: true },
  { icon: <OfficeIcon letter="P" tile="#c43e1c" bands={["#ed6c47", "#ed6c47", "#d35230", "#d35230"]} round />, open: true },
  { icon: <OfficeIcon letter="X" tile="#107c41" bands={["#21a366", "#33c481", "#107c41", "#185c37"]} />, open: true },
];

function Taskbar() {
  return (
    <footer className="flex h-[60px] bg-[linear-gradient(to_right,#271602_0,#1f1f24_590px,#1d1c22_980px,#030303_1010px,#030303_1060px,#150f10_1120px,#150f10_1400px,#040303_1440px)]">
      <div className="flex w-[72px] shrink-0 items-center justify-center bg-[#271602]">
        <svg viewBox="0 0 24 24" className="size-6" fill="#fff"><path d="M0 3.300L10 2V11.300H0zM11 1.800L24 0V11.300H11zM0 12.400H10V21.900L0 20.600zM11 12.400H24V24L11 22.200z" /></svg>
      </div>
      <div className="flex w-[516px] shrink-0 items-center border-t border-[#b4b4b4] bg-[#f1f1f1] pl-[13px]">
        <svg viewBox="0 0 34 34" className="size-[34px]" fill="none"><circle cx="17" cy="17" r="14.500" stroke="#8b8b8b" strokeWidth="4.500" /><circle cx="17" cy="17" r="14" stroke="#000" strokeWidth="3.400" /></svg>
        <span className="ml-[13px] pt-[1px] text-[20px] tracking-[-0.130px] text-[#2c2c2c]">Type here to search</span>
        <svg viewBox="0 0 18 26" className="mr-[22px] ml-auto h-[26px] w-[18px]" fill="none" stroke="#333" strokeWidth="1.600">
          <rect x="4.500" y="1" width="9" height="17" rx="2" /><path d="M1 12.500V17a4 4 0 0 0 4 4h8a4 4 0 0 0 4-4V12.500M9 21v3.500M4.500 24.500h9" />
        </svg>
      </div>
      <div className="flex w-[77px] shrink-0 items-center pl-[21px]">
        <svg viewBox="0 0 30 22" className="h-[22px] w-[30px]" fill="none" stroke="#f4f4f4" strokeWidth="1.500"><path d="M6 1h18v20H6zM4 4H.800v14H4M26 4h3.200v14H26" /></svg>
      </div>
      {apps.map((a, i) => (
        <div key={i} className={`flex w-[59.200px] shrink-0 flex-col items-center justify-end ${a.active ? "bg-[#49494e] bg-clip-content px-[1px]" : ""}`}>
          <div className="flex flex-1 items-center justify-center">{a.icon}</div>
          {a.open && <div className={`-mt-[3px] h-[3px] bg-[#76b9ed] ${a.active ? "w-[57px]" : "w-[46px]"}`} />}
        </div>
      ))}
      <div className="flex flex-1 items-center pl-[18px]">
        <svg viewBox="0 0 20 12" className="h-3 w-5" fill="none" stroke="#fff" strokeWidth="1.500"><path d="M1 11L10 2L19 11" /></svg>
        <svg viewBox="0 0 20 20" className="ml-[30px] size-5" fill="none" stroke="#e6e6e6" strokeWidth="1.300">
          <path d="M1 19A18 18 0 0 1 19 1M5.500 19A13.500 13.500 0 0 1 19 5.500M10 19A9 9 0 0 1 19 10M14 19A5 5 0 0 1 19 14" /><circle cx="17.500" cy="17.500" r="1.600" fill="#fff" stroke="none" />
        </svg>
        <svg viewBox="0 0 26 18" className="ml-[23px] h-[18px] w-[26px]"><circle cx="13" cy="8" r="7" fill="#8a8a8a" /><circle cx="6.500" cy="11.500" r="5.500" fill="#c9c9c9" /><path d="M5 17L18 7a6 6 0 0 1 2 10z" fill="#fff" /><circle cx="20.500" cy="12" r="4.800" fill="#ececec" /></svg>
        <FaDropbox className="ml-[21px] size-[26px] text-white" />
        <svg viewBox="0 0 24 14" className="ml-[23px] h-[14px] w-6" fill="none" stroke="#fff" strokeWidth="1.300"><path d="M1 1h21v12H1zM23.300 5v4" /><rect x="2.500" y="2.500" width="8" height="9" fill="#fff" stroke="none" /></svg>
      </div>
      <div className="flex w-[238px] shrink-0 items-center bg-[#271602] pl-[8px]">
        <svg viewBox="0 0 24 20" className="h-5 w-6" fill="none" stroke="#fff" strokeWidth="1.400"><path d="M1.500 6.500H5L9.500 1.500V18.500L5 13.500H1.500z" /><path d="M13 7.500a4 4 0 0 1 0 5M16 5a7 7 0 0 1 0 10" /><path d="M19.500 2.500a11 11 0 0 1 0 15" stroke="#8a7c6c" /></svg>
        <div className="ml-[12px] flex h-full w-[114px] flex-col items-center justify-center bg-[#3b2b1a] text-[17.500px] leading-[28px] tracking-[-0.100px] text-white">
          <span>20:46</span><span>15/07/2019</span>
        </div>
        <svg viewBox="0 0 24 24" className="ml-[18px] size-6" fill="none" stroke="#fff" strokeWidth="1.400"><path d="M1 1h22v17.500H15.500L12 22.500L8 18.500H1z" /></svg>
        <div className="ml-auto h-full w-[8px] border-l-2 border-[#837a70]" />
      </div>
    </footer>
  );
}

export default function App() {
  return (
    <div className="relative flex h-[1080px] w-[1920px] flex-col overflow-hidden bg-white font-['Open_Sans','Noto_Sans',sans-serif]">
      <TabBar />
      <NavBar />
      <header className="flex h-[104px] items-center bg-[#360f4c] pl-[18px]">
        <Logo />
        <h1 className="ml-[41px] pt-[1px] text-[25.500px] font-semibold tracking-[-0.030px] text-[#f5f5f5]">ENTITY MATCHING TOOL</h1>
      </header>
      <Content />
      <Taskbar />
      <div className="absolute top-[965px] left-[1727px] h-[55px] w-[112px] border border-[#767676] bg-white pl-[5px] text-[17.500px] leading-[25px] tracking-[0.050px] whitespace-nowrap text-[#575757] shadow-[3px_4px_3px_rgba(0,0,0,0.4)]">
        <div className="pt-[2px]">15 July 2019</div>
        <div>Monday</div>
      </div>
    </div>
  );
}
